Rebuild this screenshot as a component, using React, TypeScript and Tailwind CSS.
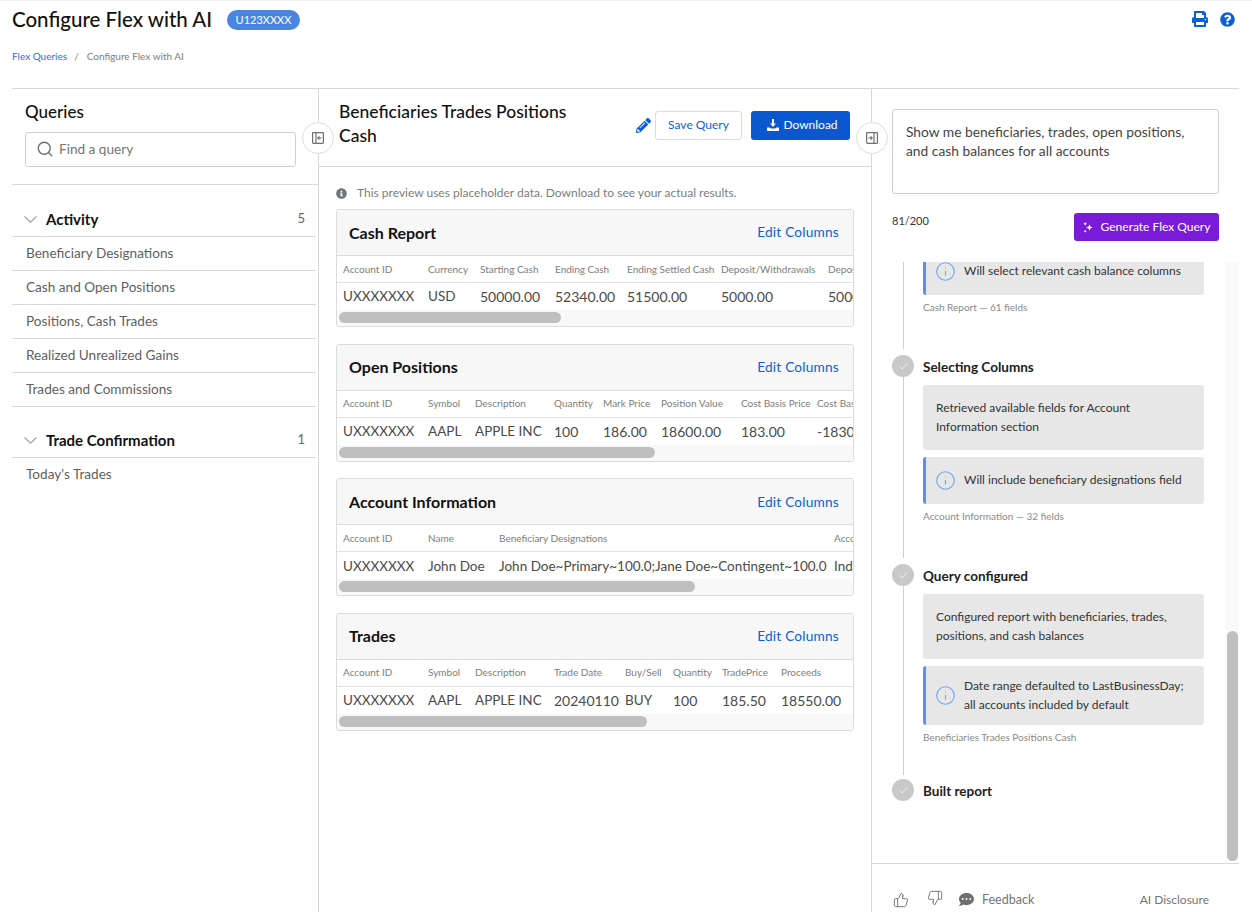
import { Search, Check, Info, ThumbsUp, ThumbsDown } from "lucide-react";
import { FaPencilAlt, FaPrint, FaQuestionCircle, FaInfoCircle, FaCommentDots } from "react-icons/fa";

const activity = [
  "Beneficiary Designations",
  "Cash and Open Positions",
  "Positions, Cash Trades",
  "Realized Unrealized Gains",
  "Trades and Commissions",
];

const reports = [
  {
    title: "Cash Report",
    cols: "grid-cols-[85px_52px_75px_72px_94px_107px_60px]",
    thumb: "w-[222px]",
    head: ["Account ID", "Currency", "Starting Cash", "Ending Cash", "Ending Settled Cash", "Deposit/Withdrawals", "Deposits"],
    row: ["UXXXXXXX", "USD", "50000.00", "52340.00", "51500.00", "5000.00", "5000.00"],
  },
  {
    title: "Open Positions",
    cols: "grid-cols-[85px_47px_79px_49px_58px_80px_76px_60px]",
    thumb: "w-[316px]",
    head: ["Account ID", "Symbol", "Description", "Quantity", "Mark Price", "Position Value", "Cost Basis Price", "Cost Basis"],
    row: ["UXXXXXXX", "AAPL", "APPLE INC", "100", "186.00", "18600.00", "183.00", "-18300.00"],
  },
  {
    title: "Account Information",
    cols: "grid-cols-[85px_71px_335px_60px]",
    thumb: "w-[356px]",
    head: ["Account ID", "Name", "Beneficiary Designations", "Account Type"],
    row: ["UXXXXXXX", "John Doe", "John Doe~Primary~100.0;Jane Doe~Contingent~100.0", "Individual"],
  },
  {
    title: "Trades",
    cols: "grid-cols-[85px_47px_79px_71px_48px_49px_59px_70px]",
    thumb: "w-[308px]",
    head: ["Account ID", "Symbol", "Description", "Trade Date", "Buy/Sell", "Quantity", "TradePrice", "Proceeds"],
    row: ["UXXXXXXX", "AAPL", "APPLE INC", "20240110", "BUY", "100", "185.50", "18550.00"],
  },
];

function PanelToggle({ side }: { side: "left" | "right" }) {
  return (
    <svg viewBox="0 0 12 12" className="h-[12px] w-[12px] text-[#6f6f6f]" fill="none" stroke="currentColor" strokeWidth="1.2">
      <rect x="0.6" y="0.6" width="10.8" height="10.8" rx="0.8" />
      {side === "left" ? (
        <>
          <path d="M4 0.6V11.4" />
          <path d="M9.6 6H6M7.4 4.4 5.8 6l1.6 1.6" />
        </>
      ) : (
        <>
          <path d="M8 0.6V11.4" />
          <path d="M2.4 6H6M4.6 4.4 6.2 6 4.6 7.6" />
        </>
      )}
    </svg>
  );
}

function DownloadIcon() {
  return (
    <svg viewBox="0 0 12 12" className="h-[12px] w-[12px]" fill="currentColor">
      <path d="M5 0h2v4.6h2L6 8 3 4.6h2z" />
      <path d="M0 8.4h2.6L4 9.6h4l1.4-1.2H12V12H0z" />
    </svg>
  );
}

function Sparkle() {
  return (
    <svg viewBox="0 0 12 12" className="h-[11px] w-[11px]" fill="currentColor">
      <path d="M7 2.4 8 5l2.6 1L8 7 7 9.6 6 7 3.4 6 6 5z" />
      <path d="M2.4 0 3 1.4 4.4 2 3 2.6 2.4 4 1.8 2.6.4 2 1.8 1.4z" />
      <path d="M2.4 8.2 2.9 9.5 4.2 10l-1.3.5-.5 1.3-.5-1.3L.6 10l1.3-.5z" />
    </svg>
  );
}

function Chevron() {
  return (
    <svg viewBox="0 0 13 7" className="h-[7px] w-[13px] text-[#a3a3a3]" fill="none" stroke="currentColor" strokeWidth="1.2">
      <path d="M0.5 0.5 6.5 6.2 12.5 0.5" />
    </svg>
  );
}

function ReportCard({ report }: { report: (typeof reports)[number] }) {
  return (
    <div className="overflow-hidden rounded-[3px] border border-[#dcdcdc]">
      <div className="flex h-[46px] items-center justify-between border-b border-[#dcdcdc] bg-[#f7f7f7] pl-[12px] pr-[14px]">
        <h3 className="text-[16px] font-bold text-[#121212]">{report.title}</h3>
        <a className="text-[13.7px] tracking-[0.2px] text-[#0b5fd8]">Edit Columns</a>
      </div>
      <div className={`grid h-[27px] items-center overflow-hidden whitespace-nowrap border-b border-[#e2e2e2] pl-[6px] text-[10px] text-[#7d7d7d] ${report.cols}`}>
        {report.head.map((h) => (
          <span key={h}>{h}</span>
        ))}
      </div>
      <div className={`grid h-[27px] items-center overflow-hidden whitespace-nowrap pl-[6px] text-[#4a4a4a] ${report.cols}`}>
        {report.row.map((v) => (
          <span key={v} className={/^[-\d.]+$/.test(v) ? "text-[14px]" : "text-[13.5px]"}>
            {v}
          </span>
        ))}
      </div>
      <div className="h-[16px] bg-[#f8f8f8] pl-[2px] pt-[2px]">
        <div className={`h-[11px] rounded-full bg-[#bfbfbf] ${report.thumb}`} />
      </div>
    </div>
  );
}

function StepDot() {
  return (
    <div className="flex h-[22px] w-[22px] shrink-0 items-center justify-center rounded-full bg-[#c8c8c8]">
      <Check className="h-[11px] w-[11px] text-white" strokeWidth={1.5} />
    </div>
  );
}

function NoteBox({ children }: { children: React.ReactNode }) {
  return (
    <div className="flex min-h-[47px] items-center gap-[8px] rounded-[3px] border-l-[3px] border-[#5b93e8] bg-[#e7e7e7] py-[9.5px] pl-[9px] pr-[16px] text-[12px] leading-[19px] text-[#333333]">
      <Info className="h-[21px] w-[21px] shrink-0 text-[#6aa5f2]" strokeWidth={1.3} />
      <span className="pb-[2px]">{children}</span>
    </div>
  );
}

function PlainBox({ children }: { children: React.ReactNode }) {
  return <div className="rounded-[3px] bg-[#e7e7e7] px-[13px] pb-[14.5px] pt-[12.5px] text-[12px] leading-[19px] text-[#333333]">{children}</div>;
}

function Caption({ children }: { children: React.ReactNode }) {
  return <p className="mt-[5px] text-[10px] leading-[14px] text-[#8a8a8a]">{children}</p>;
}

export default function App() {
  return (
    <div className="flex h-[912px] w-[1252px] flex-col overflow-hidden bg-white font-['Lato',sans-serif] text-[#121212]">
      {/* Page header */}
      <header className="h-[88px] shrink-0 border-t border-[#eeeeee] pl-[12px] pr-[17px]">
        <div className="flex items-center justify-between pt-[5px]">
          <div className="flex items-center gap-[15px]">
            <h1 className="text-[20.5px] font-medium leading-[26px]">Configure Flex with AI</h1>
            <span className="mt-[1px] rounded-full bg-[#4a86e0] px-[8.5px] py-[2px] text-[11px] leading-[16px] text-white">U123XXXX</span>
          </div>
          <div className="flex items-center gap-[12px] text-[#0b5fd8]">
            <FaPrint className="h-[16px] w-[16px]" />
            <FaQuestionCircle className="h-[15px] w-[15px]" />
          </div>
        </div>
        <div className="mt-[17px] flex gap-[7px] text-[10px] leading-[14px] text-[#7d7d7d]">
          <a className="text-[#2a6fd6]">Flex Queries</a>
          <span className="mr-[1px]">/</span>
          <span>Configure Flex with AI</span>
        </div>
      </header>

      <div className="ml-[12px] mr-[13px] flex min-h-0 flex-1 border-t border-[#d8d8d8]">
        {/* Queries */}
        <aside className="w-[307px] shrink-0 border-r border-[#d8d8d8]">
          <div className="h-[96px] border-b border-[#d8d8d8] pl-[13px] pr-[22px] pt-[11px]">
            <h2 className="text-[17px] font-medium leading-[24px]">Queries</h2>
            <div className="mt-[8px] flex h-[35px] items-center gap-[5px] rounded-[3px] border border-[#cfcfcf] pb-[1px] pl-[10px] text-[13.6px] text-[#757575]">
              <Search className="h-[18px] w-[18px] text-[#6f6f6f]" strokeWidth={1.8} />
              <span>Find a query</span>
            </div>
          </div>
          <div className="mt-[17px]">
            <div className="mr-[2px] flex h-[35px] items-center justify-between border-b border-[#d8d8d8] pl-[12px] pr-[11px]">
              <div className="flex items-center gap-[9px]">
                <Chevron />
                <span className="text-[15px] font-bold">Activity</span>
              </div>
              <span className="text-[13px] text-[#666666]">5</span>
            </div>
            {activity.map((name) => (
              <div key={name} className="mr-[2px] flex h-[34px] items-center border-b border-[#d8d8d8] pb-[1px] pl-[14px] text-[13.6px] text-[#5f5f5f]">
                {name}
              </div>
            ))}
            <div className="mr-[2px] mt-[16px] flex h-[35px] items-center justify-between border-b border-[#d8d8d8] pl-[12px] pr-[11px]">
              <div className="flex items-center gap-[9px]">
                <Chevron />
                <span className="text-[15px] font-bold">Trade Confirmation</span>
              </div>
              <span className="text-[13px] text-[#666666]">1</span>
            </div>
            <div className="flex h-[34px] items-center pb-[1px] pl-[14px] text-[13.6px] text-[#5f5f5f]">Today's Trades</div>
          </div>
        </aside>

        {/* Preview */}
        <main className="relative w-[553px] shrink-0 border-r border-[#d8d8d8]">
          <div className="absolute -left-[17px] top-[33px] flex h-[32px] w-[32px] items-center justify-center rounded-full border border-[#dedede] bg-white">
            <PanelToggle side="left" />
          </div>
          <div className="absolute -right-[17px] top-[33px] z-10 flex h-[32px] w-[32px] items-center justify-center rounded-full border border-[#dedede] bg-white">
            <PanelToggle side="right" />
          </div>
          <div className="flex h-[78px] items-start justify-between border-b border-[#d8d8d8] pl-[20px] pr-[21px] pt-[11px]">
            <h2 className="w-[260px] text-[17.5px] font-medium leading-[24px]">Beneficiaries Trades Positions Cash</h2>
            <div className="flex items-center pt-[11px]">
              <FaPencilAlt className="mr-[4px] h-[15px] w-[15px] text-[#0b5fd8]" />
              <button className="h-[29px] w-[87px] rounded-[3px] border border-[#dcdcdc] pb-[2px] text-[12px] text-[#0b5fd8]">Save Query</button>
              <button className="ml-[9px] flex h-[29px] w-[99px] items-center justify-center gap-[4px] rounded-[3px] bg-[#0b57d0] pb-[1px] pl-[4px] text-[12px] text-white">
                <DownloadIcon />
                Download
              </button>
            </div>
          </div>
          <div className="pl-[17px] pr-[17px] pt-[19px]">
            <div className="flex h-[14px] items-center gap-[10px] text-[12px] text-[#7d7d7d]">
              <FaInfoCircle className="h-[11px] w-[11px] text-[#6f7780]" />
              <span>This preview uses placeholder data. Download to see your actual results.</span>
            </div>
            <div className="mt-[9px] flex flex-col gap-[16.67px]">
              {reports.map((r) => (
                <ReportCard key={r.title} report={r} />
              ))}
            </div>
          </div>
        </main>

        {/* Assistant */}
        <aside className="flex min-w-0 flex-1 flex-col">
          <div className="h-[173px] shrink-0 pl-[20px] pr-[20px] pt-[20px]">
            <div className="h-[85px] rounded-[3px] border border-[#cfcfcf] px-[13px] pb-[13px] pt-[12px] text-[13.8px] leading-[19px] text-[#444444]">
              Show me beneficiaries, trades, open positions, and cash balances for all accounts
            </div>
            <div className="mt-[19px] flex items-start justify-between">
              <span className="text-[11px] leading-[16px] text-[#333333]">81/200</span>
              <button className="flex h-[28px] w-[145px] items-center justify-center gap-[7px] rounded-[3px] bg-[#7a1bd8] text-[12px] text-white">
                <Sparkle />
                Generate Flex Query
              </button>
            </div>
          </div>
          <div className="relative min-h-0 flex-1 overflow-hidden pl-[20px]">
            {/* scrollbar track */}
            <div className="absolute bottom-[2px] right-0 top-0 w-[14px] bg-[#fafafa]">
              <div className="absolute bottom-0 left-[2px] h-[230px] w-[11px] rounded-full bg-[#bfbfbf]" />
            </div>
            <div className="-mt-[14px] w-[312px]">
              <div className="flex h-[107px]">
                <div className="flex w-[22px] shrink-0 justify-center pb-[6px]">
                  <div className="w-px bg-[#cfcfcf]" />
                </div>
                <div className="ml-[9px] flex-1">
                  <NoteBox>Will select relevant cash balance columns</NoteBox>
                  <Caption>Cash Report — 61 fields</Caption>
                </div>
              </div>
              <div className="flex h-[209px]">
                <div className="flex w-[22px] shrink-0 flex-col items-center pb-[6px]">
                  <StepDot />
                  <div className="w-px flex-1 bg-[#cfcfcf]" />
                </div>
                <div className="ml-[9px] flex-1">
                  <h4 className="text-[13.5px] font-bold leading-[24px] text-[#222222]">Selecting Columns</h4>
                  <div className="mt-[6px] flex flex-col gap-[7px]">
                    <PlainBox>Retrieved available fields for Account Information section</PlainBox>
                    <NoteBox>Will include beneficiary designations field</NoteBox>
                  </div>
                  <Caption>Account Information — 32 fields</Caption>
                </div>
              </div>
              <div className="flex h-[215px]">
                <div className="flex w-[22px] shrink-0 flex-col items-center pb-[4px]">
                  <StepDot />
                  <div className="w-px flex-1 bg-[#cfcfcf]" />
                </div>
                <div className="ml-[9px] flex-1">
                  <h4 className="text-[13.5px] font-bold leading-[24px] text-[#222222]">Query configured</h4>
                  <div className="mt-[6px] flex flex-col gap-[7px]">
                    <PlainBox>Configured report with beneficiaries, trades, positions, and cash balances</PlainBox>
                    <NoteBox>Date range defaulted to LastBusinessDay; all accounts included by default</NoteBox>
                  </div>
                  <Caption>Beneficiaries Trades Positions Cash</Caption>
                </div>
              </div>
              <div className="flex">
                <StepDot />
                <h4 className="ml-[9px] text-[13.5px] font-bold leading-[24px] text-[#222222]">Built report</h4>
              </div>
            </div>
          </div>
          <div className="flex h-[49px] shrink-0 items-center justify-between border-t border-[#d8d8d8] pl-[21px] pr-[30px] pt-[23px] text-[12.5px] text-[#757575]">
            <div className="flex items-center">
              <ThumbsUp className="h-[16px] w-[16px] text-[#6f6f6f]" strokeWidth={1.4} />
              <ThumbsDown className="-mt-[3px] ml-[18px] h-[16px] w-[16px] text-[#6f6f6f]" strokeWidth={1.4} />
              <FaCommentDots className="ml-[16px] h-[15px] w-[15px] text-[#6f6f6f]" />
              <span className="ml-[8px] mt-[2px]">Feedback</span>
            </div>
            <span className="text-[12px]">AI Disclosure</span>
          </div>
        </aside>
      </div>
    </div>
  );
}
